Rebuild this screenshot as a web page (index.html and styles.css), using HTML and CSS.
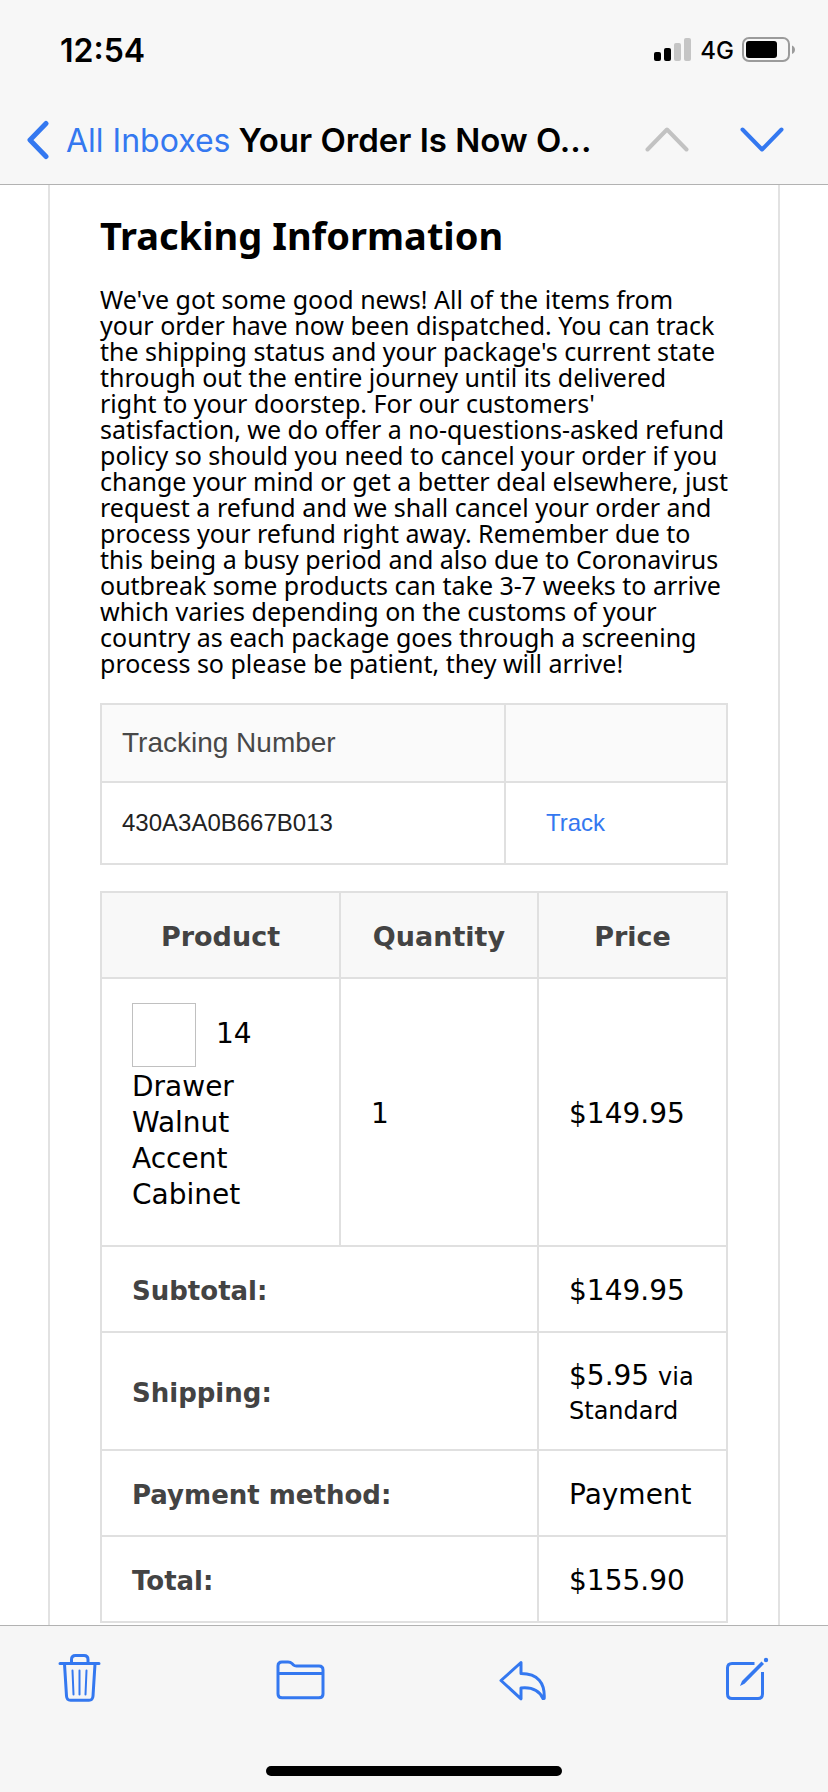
FILE: index.html
```html
<!DOCTYPE html>
<html lang="en">
<head>
<meta charset="utf-8">
<meta name="viewport" content="width=device-width, initial-scale=1">
<title>Your Order Is Now On Its Way</title>
<link rel="stylesheet" href="styles.css">
</head>
<body class="screen">
<header class="top">
  <div class="status">
    <span class="clock">12:54</span>
    <div class="indicators">
      <svg class="signal" viewBox="0 0 38 24" aria-label="Signal">
        <rect x="0" y="14" width="7" height="9" rx="2"/>
        <rect x="10" y="10" width="7" height="13" rx="2"/>
        <rect class="dim" x="20" y="5" width="7" height="18" rx="2"/>
        <rect class="dim" x="30" y="0" width="7" height="23" rx="2"/>
      </svg>
      <span class="network">4G</span>
      <svg class="battery" viewBox="0 0 54 26" aria-label="Battery">
        <rect class="shell" x="1" y="1" width="46" height="23" rx="6"/>
        <rect x="4" y="4" width="31" height="17" rx="3"/>
        <path class="nub" d="M50 8.500C54 10 54 15.500 50 17Z"/>
      </svg>
    </div>
  </div>
  <nav class="nav">
    <a class="back" href="#inbox">
      <svg class="back-icon" viewBox="0 0 24 40" aria-hidden="true"><path d="M20 3.500 4 20 20 36.500"/></svg>
      <span>All Inboxes</span>
    </a>
    <h1 class="subject">Your Order Is Now O...</h1>
    <div class="pager">
      <button class="page-button" type="button" aria-label="Previous message" disabled><svg class="page-icon" viewBox="0 0 44 26"><path d="M2.500 22.500 22 2.500 41.500 22.500"/></svg></button>
      <button class="page-button" type="button" aria-label="Next message"><svg class="page-icon" viewBox="0 0 44 26"><path d="M2.500 2.500 22 22.500 41.500 2.500"/></svg></button>
    </div>
  </nav>
</header>

<main class="message">
  <article class="card">
    <h2 class="heading">Tracking Information</h2>
    <p class="intro">We've got some good news! All of the items from<br>
your order have now been dispatched. You can track<br>
the shipping status and your package's current state<br>
through out the entire journey until its delivered<br>
right to your doorstep. For our customers'<br>
satisfaction, we do offer a no-questions-asked refund<br>
policy so should you need to cancel your order if you<br>
change your mind or get a better deal elsewhere, just<br>
request a refund and we shall cancel your order and<br>
process your refund right away. Remember due to<br>
this being a busy period and also due to Coronavirus<br>
outbreak some products can take 3-7 weeks to arrive<br>
which varies depending on the customs of your<br>
country as each package goes through a screening<br>
process so please be patient, they will arrive!</p>

    <table class="grid tracking">
      <colgroup><col><col class="col-track"></colgroup>
      <thead><tr><th scope="col">Tracking Number</th><th></th></tr></thead>
      <tbody><tr><td>430A3A0B667B013</td><td class="track-cell"><a class="track" href="#track">Track</a></td></tr></tbody>
    </table>

    <table class="grid order">
      <colgroup><col><col class="col-quantity"><col class="col-price"></colgroup>
      <thead><tr><th scope="col">Product</th><th scope="col">Quantity</th><th scope="col">Price</th></tr></thead>
      <tbody>
        <tr>
          <td class="product"><div class="product-lead"><span class="thumb" role="img" aria-label="Product picture"></span><span>14</span></div>Drawer<br>Walnut<br>Accent<br>Cabinet</td>
          <td>1</td>
          <td class="price">$149.95</td>
        </tr>
      </tbody>
      <tfoot>
        <tr><th scope="row" colspan="2">Subtotal:</th><td class="price">$149.95</td></tr>
        <tr><th scope="row" colspan="2">Shipping:</th><td class="price shipping">$5.95 <small class="via">via Standard</small></td></tr>
        <tr><th scope="row" colspan="2">Payment method:</th><td class="price">Payment</td></tr>
        <tr><th scope="row" colspan="2">Total:</th><td class="price">$155.90</td></tr>
      </tfoot>
    </table>
  </article>
</main>

<footer class="bottom">
  <div class="tools">
    <button class="tool" type="button" aria-label="Delete"><svg class="tool-icon" viewBox="0 0 56 52">
      <path d="M8 11.500H47M19.500 11V7.500Q19.500 3.500 23.500 3.500H32Q36 3.500 36 7.500V11M12.500 12 14.500 44Q14.800 48.300 18.500 48.300H37Q40.700 48.300 41 44L43 12"/>
      <path class="thin" d="M20.500 18.500 21.500 42.500M27.500 18.500V42.500M34.500 18.500 33.500 42.500"/></svg></button>
    <button class="tool" type="button" aria-label="Move to folder"><svg class="tool-icon" viewBox="0 0 56 52">
      <path d="M3 21.500V14Q3 10 7 10H13Q15.500 10 17 11.500L18.500 13Q19.500 14 21.500 14H44Q48 14 48 18V42Q48 45.800 44 45.800H7Q3 45.800 3 42V21.500H48"/></svg></button>
    <button class="tool" type="button" aria-label="Reply"><svg class="tool-icon" viewBox="0 0 56 52">
      <path d="M24 10.500 4 28.500 24 46.800V36C34 35 42 38 46 46.500H47.200C48 31 41 21.500 24 21.500Z"/></svg></button>
    <button class="tool" type="button" aria-label="Compose"><svg class="tool-icon" viewBox="0 0 56 52">
      <path class="cut" d="M34.500 11.500H12Q7.500 11.500 7.500 16V42Q7.500 46.500 12 46.500H38Q42.500 46.500 42.500 42V20"/>
      <path class="fill" d="M20 34 22 29 41.500 9.500 44 12 24.500 31.800Z"/>
      <circle class="fill" cx="46" cy="8" r="2.200"/></svg></button>
  </div>
  <div class="home"></div>
</footer>
</body>
</html>
```
FILE: styles.css
```css
* { box-sizing: border-box; }

.screen {
  margin: 0;
  min-height: 100vh;
  display: flex;
  flex-direction: column;
  background: #fff;
  color: #000;
  font-family: Inter, "Liberation Sans", sans-serif;
}

/* Status and navigation bars */
.top {
  background: #f7f7f7;
  border-bottom: 1px solid #b2b2b2;
}
.status {
  display: flex;
  justify-content: space-between;
  align-items: center;
  height: 100px;
  padding: 0 32px 0 60px;
}
.clock { font-size: 32px; font-weight: 600; }
.indicators { display: flex; align-items: center; gap: 8px; }
.network { font-size: 24px; font-weight: 500; }
.signal { width: 38px; height: 24px; }
.signal .dim { fill: #c5c5c5; }
.battery { width: 54px; height: 26px; }
.battery .shell { fill: none; stroke: #9b9b9b; stroke-width: 2; }
.battery .nub { fill: #9b9b9b; }

.nav {
  display: flex;
  align-items: center;
  height: 84px;
  padding: 0 44px 4px 26px;
}
.back {
  display: flex;
  align-items: center;
  gap: 16px;
  color: #3478f0;
  font-size: 32px;
  text-decoration: none;
  white-space: nowrap;
}
.back-icon, .page-icon, .tool-icon {
  display: block;
  fill: none;
  stroke: currentColor;
  stroke-linecap: round;
  stroke-linejoin: round;
}
.back-icon { width: 24px; height: 40px; stroke-width: 5; }
.subject {
  margin: 0 0 0 8px;
  font-size: 33px;
  font-weight: 600;
  white-space: nowrap;
}
.pager { display: flex; gap: 51px; margin-left: auto; }
.page-button, .tool {
  padding: 0;
  border: 0;
  background: none;
  color: #3478f0;
}
.page-button:disabled { color: #c2c2c2; }
.page-icon { width: 44px; height: 26px; stroke-width: 4; }

/* Message */
.message {
  flex: 1;
  display: flex;
  padding: 0 48px;
}
.card {
  flex: 1;
  padding: 24px 50px 0;
  border: solid #e2e2e2;
  border-width: 0 2px;
}
.heading {
  margin: 0 0 25px;
  font: 700 38px/52px "Noto Sans", sans-serif;
  white-space: nowrap;
}
.intro {
  margin: 0 0 27px;
  font: 25px/26px "Noto Sans", sans-serif;
  white-space: nowrap;
}

.grid {
  width: 100%;
  table-layout: fixed;
  border-collapse: collapse;
}
.grid th, .grid td {
  border: 2px solid #e0e0e0;
  text-align: left;
}

.tracking {
  margin-bottom: 26px;
  color: #222;
  font: 24px/40px "Liberation Sans", sans-serif;
}
.tracking th, .tracking td { padding: 20px; }
.tracking th {
  background: #fafafa;
  color: #484848;
  font-size: 28px;
  font-weight: 400;
  line-height: 36px;
}
.tracking .track-cell { padding-left: 40px; }
.track { color: #3478f0; text-decoration: none; }
.col-track { width: 222px; }

.order { font: 28px/36px Verdana, "DejaVu Sans", sans-serif; }
.order th, .order td { padding: 26px 30px 22px; }
.order th { color: #434343; font-size: 26px; }
.order thead th {
  padding: 26px 0 22px;
  background: #f8f8f8;
  font-size: 27px;
  text-align: center;
}
.order .price { padding-right: 20px; }
.order .shipping { line-height: 34px; }
.order .product { padding: 24px 30px 32px; }
.col-quantity { width: 198px; }
.col-price { width: 189px; }
.product-lead {
  display: flex;
  gap: 20px;
  padding-bottom: 2px;
  line-height: 62px;
}
.thumb {
  width: 64px;
  height: 64px;
  border: 1px solid #c0c0c0;
}
.via { font-size: 24px; line-height: 32px; }

/* Toolbar */
.bottom {
  background: #f6f6f6;
  border-top: 1px solid #b2b2b2;
}
.tools {
  display: flex;
  justify-content: space-between;
  padding: 26px 52px 62px;
}
.tool-icon { width: 56px; height: 52px; stroke-width: 3; }
.tool-icon .thin { stroke-width: 2; }
.tool-icon .cut { stroke-linecap: butt; }
.tool-icon .fill { fill: currentColor; stroke: none; }
.home {
  width: 296px;
  height: 10px;
  margin: 0 auto 16px;
  border-radius: 5px;
  background: #000;
}
```
